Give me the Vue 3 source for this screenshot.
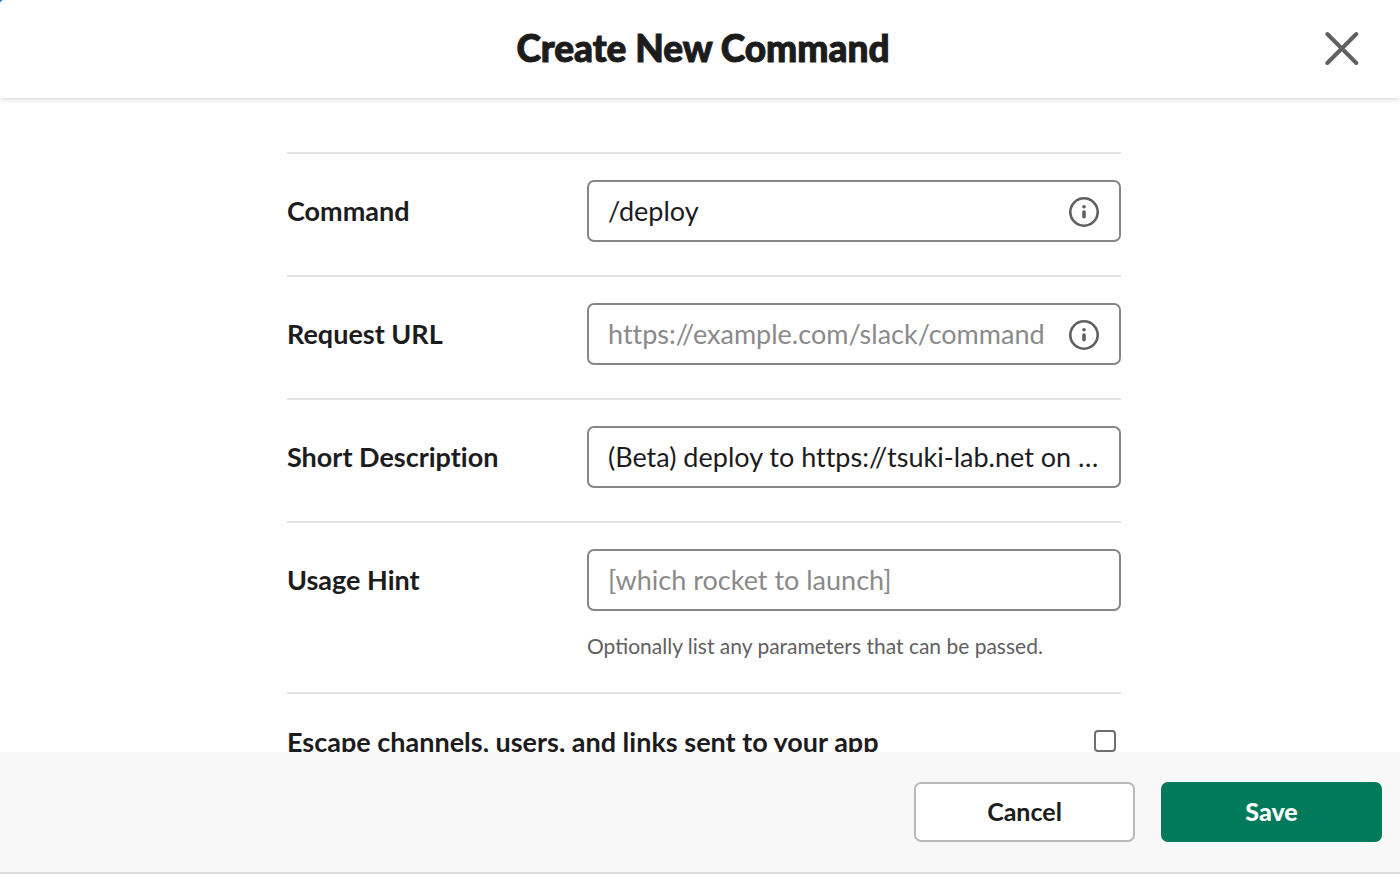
<script setup>
import { reactive } from 'vue';

const form = reactive({
    command: '/deploy',
    url: '',
    description: '(Beta) deploy to https://tsuki-lab.net on …',
    hint: '',
    escape: false
});

const fields = [
    { key: 'command', label: 'Command', info: true },
    { key: 'url', label: 'Request URL', placeholder: 'https://example.com/slack/command', info: true },
    { key: 'description', label: 'Short Description' },
    {
        key: 'hint',
        label: 'Usage Hint',
        placeholder: '[which rocket to launch]',
        note: 'Optionally list any parameters that can be passed.'
    }
];
</script>

<template>
    <div class="dialog">
        <header class="header">
            <h1>Create New Command</h1>
            <button type="button" class="close" aria-label="Close">
                <svg viewBox="0 0 36 36" width="36" height="36">
                    <path d="M3.3 3 32.3 32M32.3 3 3.3 32" />
                </svg>
            </button>
        </header>

        <main class="body">
            <form id="command-form" class="form" @submit.prevent>
                <div v-for="field in fields" :key="field.key" class="row">
                    <label :for="field.key">{{ field.label }}</label>
                    <div class="control">
                        <div class="box">
                            <input :id="field.key" v-model="form[field.key]" type="text"
                                :placeholder="field.placeholder">
                            <svg v-if="field.info" class="info" viewBox="0 0 32 32" width="32" height="32">
                                <circle cx="16" cy="16" r="13.7" />
                                <circle class="dot" cx="16" cy="10.8" r="1.8" />
                                <path d="M16 16V20.8" />
                            </svg>
                        </div>
                        <p v-if="field.note" class="note">{{ field.note }}</p>
                    </div>
                </div>

                <div class="row row-check">
                    <label for="escape">Escape channels, users, and links sent to your app</label>
                    <input id="escape" v-model="form.escape" type="checkbox">
                </div>
            </form>
        </main>

        <footer class="footer">
            <button type="button" class="btn">Cancel</button>
            <button type="submit" form="command-form" class="btn save">Save</button>
        </footer>
    </div>
</template>

<style>
body {
    margin: 0;
    background: #1264d8;
}
</style>

<style scoped>
.dialog {
    display: flex;
    flex-direction: column;
    height: 100vh;
    overflow: hidden;
    border-top-left-radius: 4px;
    background: #fff;
    color: #1d1c1d;
    font-family: Lato, "Liberation Sans", sans-serif;
}

.header {
    display: grid;
    grid-template-columns: 76px 1fr 76px;
    align-items: center;
    height: 98px;
    flex-shrink: 0;
    padding-left: 6px;
    box-shadow: 0 1px 6px rgba(0, 0, 0, 0.18);
    z-index: 1;
}

.header h1 {
    grid-column: 2;
    margin: 0;
    padding-bottom: 2px;
    font-size: 37px;
    line-height: 48px;
    font-weight: 900;
    text-align: center;
    -webkit-text-stroke: 1px #1d1c1d;
}

.close {
    width: 36px;
    height: 36px;
    padding: 0;
    border: none;
    background: none;
    cursor: pointer;
}

.close svg {
    display: block;
    fill: none;
    stroke: #616061;
    stroke-width: 4;
    stroke-linecap: round;
}

.body {
    flex: 1;
    min-height: 0;
    overflow: hidden;
    padding: 54px 0 0 8px;
}

.form {
    max-width: 834px;
    margin: 0 auto;
}

.row {
    display: grid;
    grid-template-columns: 300px 1fr;
    padding: 26px 0 33px;
    border-top: 2px solid #e2e2e2;
}

.row label {
    font-size: 27px;
    line-height: 62px;
    font-weight: 700;
    font-variant-ligatures: none;
}

.box {
    display: flex;
    align-items: center;
    box-sizing: border-box;
    height: 62px;
    padding: 0 19px;
    border: 2px solid #868686;
    border-radius: 7px;
}

.box input {
    flex: 1;
    min-width: 0;
    padding: 0;
    border: none;
    outline: none;
    background: none;
    color: inherit;
    font-family: inherit;
    font-size: 27px;
    line-height: 36px;
    font-variant-ligatures: none;
    text-overflow: ellipsis;
}

.box input::placeholder {
    color: #8b8a8b;
    opacity: 1;
}

.info {
    flex-shrink: 0;
    margin-top: 2px;
    fill: none;
    stroke: #616061;
    stroke-width: 2.6;
}

.info path {
    stroke-width: 3.6;
    stroke-linecap: round;
}

.info .dot {
    fill: #616061;
    stroke: none;
}

.note {
    margin: 22px 0 0;
    color: #616061;
    font-size: 21px;
    line-height: 26px;
}

.row-check {
    grid-template-columns: 1fr auto;
    align-items: center;
    padding: 17px 5px 33px 0;
}

#escape {
    appearance: none;
    box-sizing: border-box;
    width: 22px;
    height: 22px;
    margin: 0 0 2px;
    border: 2px solid #6f6e6f;
    border-radius: 4px;
    background: #fff;
}

.footer {
    display: flex;
    justify-content: flex-end;
    gap: 26px;
    flex-shrink: 0;
    padding: 30px 18px;
    border-bottom: 2px solid #dcdcdc;
    background: #f8f8f8;
}

.btn {
    box-sizing: border-box;
    width: 221px;
    height: 60px;
    padding: 0 0 2px;
    border: 2px solid #b9b9b9;
    border-radius: 7px;
    background: #fff;
    color: #1d1c1d;
    font-family: inherit;
    font-size: 25px;
    font-weight: 700;
    cursor: pointer;
}

.save {
    border-color: #007a5a;
    background: #007a5a;
    color: #fff;
    font-weight: 900;
}
</style>
